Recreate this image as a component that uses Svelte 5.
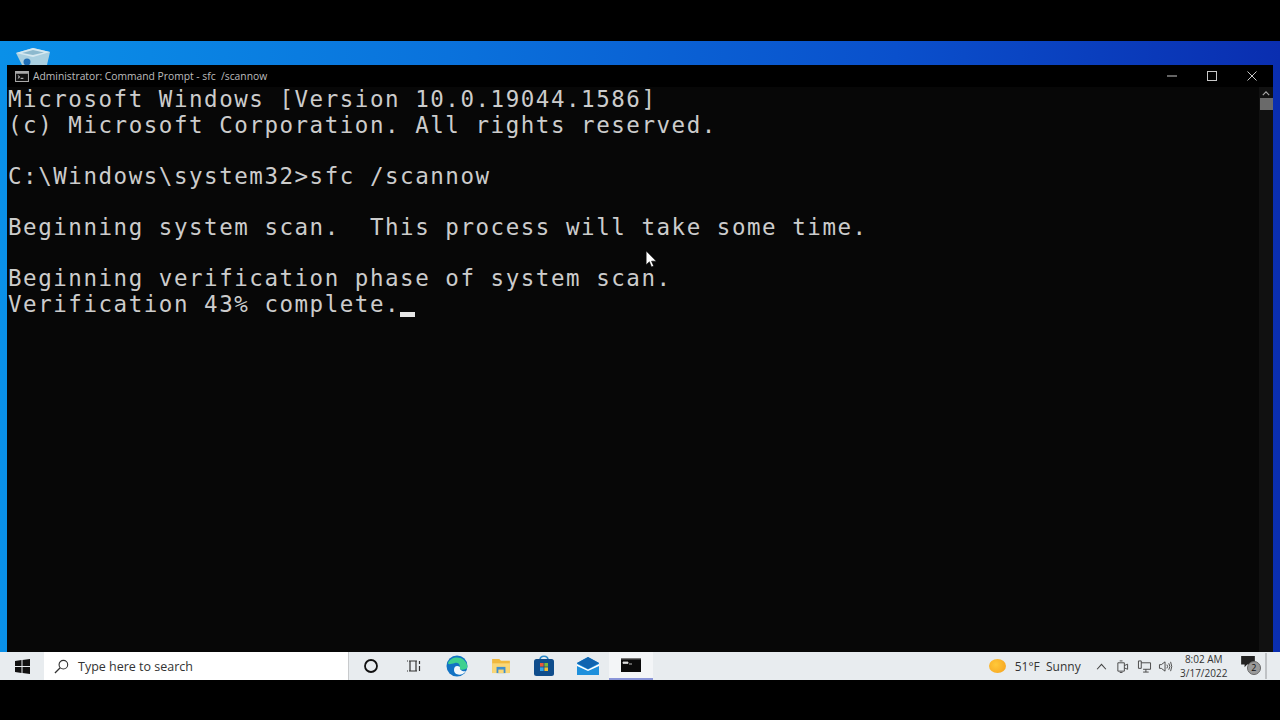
<script>
  const lines = [
    'Microsoft Windows [Version 10.0.19044.1586]',
    '(c) Microsoft Corporation. All rights reserved.',
    '',
    'C:\\Windows\\system32>sfc /scannow',
    '',
    'Beginning system scan.  This process will take some time.',
    '',
    'Beginning verification phase of system scan.',
  ];
</script>

<div class="screen">
  <div class="band"></div>
  <main class="desktop">
    <svg class="bin" viewBox="0 0 34 17" aria-hidden="true">
      <path d="M0 5 L17 0 L34 4 L31 17 H6 Z" fill="#a9cfe0" />
      <path d="M0 5 L17 0 L34 4 L17 9 Z" fill="#d5e8f0" />
      <path d="M6 5 L17 2 L28 4.5 L17 7 Z" fill="#8db9ce" />
      <circle cx="11" cy="14" r="3.5" fill="#1f6fb8" />
    </svg>
    <section class="window">
      <header class="titlebar">
        <svg class="appicon" viewBox="0 0 15 12" aria-hidden="true">
          <rect x="0.5" y="0.5" width="14" height="11" fill="#111" stroke="#bbb" />
          <rect x="1" y="1" width="13" height="2" fill="#aaa" />
          <path d="M3 5 L5 6.5 L3 8 M6 8 H9" stroke="#ddd" fill="none" />
        </svg>
        <span class="title">Administrator: Command Prompt - sfc  /scannow</span>
        <div class="controls">
          <svg viewBox="0 0 10 10" aria-hidden="true"><path d="M0 5 H10" /></svg>
          <svg viewBox="0 0 10 10" aria-hidden="true"><rect x="0.5" y="0.5" width="9" height="9" /></svg>
          <svg viewBox="0 0 10 10" aria-hidden="true"><path d="M0.5 0.5 L9.5 9.5 M9.5 0.5 L0.5 9.5" /></svg>
        </div>
      </header>
      <div class="console">
        <pre class="output">{#each lines as l}<div class="line">{l}</div>{/each}<div class="line">Verification 43% complete.<span class="caret"></span></div></pre>
        <div class="scroll">
          <svg viewBox="0 0 10 6" aria-hidden="true"><path d="M1 5 L5 1 L9 5" /></svg>
          <div class="thumb"></div>
        </div>
        <svg class="pointer" viewBox="0 0 10 15" aria-hidden="true">
          <path d="M0 0 V13 L3 10 L5 15 L7 14 L5 9.5 H9.5 Z" fill="#fff" stroke="#000" stroke-width="0.5" />
        </svg>
      </div>
    </section>
  </main>
  <footer class="taskbar">
    <div class="start">
      <svg viewBox="0 0 15 15" aria-hidden="true">
        <path d="M0 2 L6.5 1 V7 H0 Z M7.5 0.9 L15 0 V7 H7.5 Z M0 8 H6.5 V14 L0 13 Z M7.5 8 H15 V15 L7.5 14.1 Z" fill="#111" />
      </svg>
    </div>
    <div class="search">
      <svg viewBox="0 0 16 16" aria-hidden="true">
        <circle cx="10" cy="6" r="4.6" fill="none" stroke="#333" stroke-width="1.2" />
        <path d="M6.6 9.4 L1 15" stroke="#333" stroke-width="1.4" />
      </svg>
      <span>Type here to search</span>
    </div>
    <div class="apps">
      <div class="app"><svg class="w15" viewBox="0 0 16 16" aria-hidden="true"><circle cx="8" cy="8" r="6" fill="none" stroke="#111" stroke-width="1.8" /></svg></div>
      <div class="app"><svg class="w15" viewBox="0 0 16 16" aria-hidden="true"><path d="M3 3 H11 M3 13 H11 M4 3 V13 M10 3 V13 M1 3 H2 M1 13 H2 M13.5 3 V6 M13.5 8 V13" stroke="#333" fill="none" stroke-width="1.2" /></svg></div>
      <div class="app"><svg class="w22" viewBox="0 0 22 22" aria-hidden="true">
        <circle cx="11" cy="11" r="10.5" fill="#1273c4" />
        <path d="M2 8 C5 0 20 0 21.5 12 C21 15 14 16 13 13 C15 11 13 7 9 8 C5 9 2 10 2 8 Z" fill="#3fd08f" />
        <path d="M8 15 C8 11 11 10 14 12 C13 15 17 17 20 16 C17 21 8 21 8 15 Z" fill="#f2f8fc" />
      </svg></div>
      <div class="app"><svg class="w20" viewBox="0 0 20 18" aria-hidden="true">
        <path d="M0 1 H8 L10 3 H20 V17 H0 Z" fill="#f0b93f" />
        <path d="M0 6 H20 V17 H0 Z" fill="#f9d778" />
        <rect x="5" y="10" width="10" height="7" fill="#3f8fce" />
        <rect x="7" y="13" width="6" height="4" fill="#f9d778" />
      </svg></div>
      <div class="app"><svg class="w22" viewBox="0 0 22 22" aria-hidden="true">
        <path d="M7 5 C7 0 15 0 15 5" fill="none" stroke="#2a88c8" stroke-width="1.6" />
        <rect x="1" y="4" width="20" height="17" rx="2.5" fill="#0f4d8c" />
        <rect x="7" y="8" width="3.6" height="3.6" fill="#e8573a" />
        <rect x="11.4" y="8" width="3.6" height="3.6" fill="#7bb83a" />
        <rect x="7" y="12.4" width="3.6" height="3.6" fill="#35a5e8" />
        <rect x="11.4" y="12.4" width="3.6" height="3.6" fill="#f5bd2e" />
      </svg></div>
      <div class="app"><svg class="w22" viewBox="0 0 22 18" aria-hidden="true">
        <path d="M0 6 L11 0 L22 6 V18 H0 Z" fill="#1e90dc" />
        <path d="M0 6 L11 0 L22 6 L11 12 Z" fill="#0f64b0" />
        <path d="M0 7 L11 12.5 L22 7 V9 L11 14 L0 9 Z" fill="#fff" />
      </svg></div>
      <div class="app active"><svg class="w20" viewBox="0 0 20 14" aria-hidden="true">
        <rect width="20" height="14" fill="#0a0a0a" />
        <rect width="20" height="1.4" fill="#777" />
        <path d="M2 4 H7 V5.4 H2 Z M8 6 H11" stroke="#ddd" stroke-width="0.8" fill="#ddd" />
      </svg></div>
    </div>
    <div class="tray">
      <span class="sun"></span>
      <span class="weather">51°F&nbsp; Sunny</span>
      <svg class="tri" viewBox="0 0 10 6" aria-hidden="true"><path d="M1 5.5 L5 1 L9 5.5" /></svg>
      <svg class="tri-icon" viewBox="0 0 14 14" aria-hidden="true"><path d="M2 3 H9 V12 H2 Z M9 6 L12.5 4.5 V10 L9 8.5 M4 1 H7 M4 13.5 H7" /></svg>
      <svg class="tri-net" viewBox="0 0 15 14" aria-hidden="true"><path d="M1 1 H4 V9 H1 Z M4 3 H14 V10 H6 M9 10 V13 M6 13 H12" /></svg>
      <svg class="tri-vol" viewBox="0 0 15 14" aria-hidden="true"><path d="M1 5 H3 L7 2 V12 L3 9 H1 Z M9 5 Q10.5 7 9 9 M11 3.5 Q13.5 7 11 10.5 M13 2 Q15.5 7 13 12" /></svg>
      <div class="clock"><span>8:02 AM</span><span>3/17/2022</span></div>
      <div class="notes">
        <svg viewBox="0 0 16 14" aria-hidden="true"><path d="M0 0 H16 V10 H7 L4 13 V10 H0 Z" fill="#222" /></svg>
        <span class="badge">2</span>
      </div>
      <div class="edge"></div>
    </div>
  </footer>
  <div class="band"></div>
</div>

<style>
  :global(body) { margin: 0; background: #000; }
  .screen {
    width: 1280px;
    height: 720px;
    display: grid;
    grid-template-rows: 41px 1fr 28px 40px;
    overflow: hidden;
    font-family: "Open Sans", "Liberation Sans", sans-serif;
  }
  .band { background: #000; }
  .desktop {
    position: relative;
    padding: 24px 7px 0 7px;
    display: flex;
    min-height: 0;
    background: linear-gradient(90deg, #0a90e8 0%, #0a72dc 35%, #0a50cc 70%, #0a2eb0 100%);
  }
  .bin { position: absolute; left: 16px; top: 7px; width: 34px; height: 17px; }
  .window { flex: 1; display: flex; flex-direction: column; background: #070707; min-width: 0; }
  .titlebar {
    height: 22px;
    background: #000;
    display: flex;
    align-items: center;
    padding-left: 8px;
    color: #bdbdbd;
    flex: none;
  }
  .appicon { width: 14px; height: 11px; margin-right: 4px; }
  .title { white-space: pre; font-family: "Open Sans", sans-serif; font-size: 10.3px; }
  .controls { margin-left: auto; display: flex; gap: 30px; padding-right: 16px; }
  .controls svg { width: 10px; height: 10px; fill: none; stroke: #c8c8c8; stroke-width: 1; }
  .console { flex: 1; position: relative; display: flex; min-height: 0; }
  .output {
    flex: 1;
    margin: 0;
    padding: 0 0 0 1px;
    font-family: "DejaVu Sans Mono", monospace;
    font-size: 22.5px;
    letter-spacing: 1.535px;
    line-height: 25.6px;
    color: #cccccc;
  }
  .line { height: 25.6px; white-space: pre; }
  .caret { display: inline-block; width: 15px; height: 5px; background: #e6e6e6; vertical-align: -5px; }
  .scroll { width: 14px; background: #111; display: flex; flex-direction: column; align-items: center; flex: none; padding-top: 4px; gap: 2px; }
  .scroll svg { width: 8px; height: 5px; fill: none; stroke: #aaa; stroke-width: 1.4; }
  .thumb { width: 13px; height: 12px; background: #6a6a6a; }
  .pointer { position: absolute; left: 639px; top: 164px; width: 11px; height: 16px; }
  .taskbar { display: flex; align-items: stretch; background: #e8ecef; color: #222; font-size: 11.5px; }
  .start { width: 44px; display: flex; align-items: center; justify-content: center; }
  .start svg { width: 15px; height: 15px; }
  .search {
    width: 305px;
    background: #fff;
    border-right: 1px solid #c8cacc;
    display: flex;
    align-items: center;
    padding-left: 10px;
    box-sizing: border-box;
    gap: 9px;
    font-size: 12.5px;
    color: #333;
  }
  .search svg { width: 15px; height: 15px; }
  .apps { display: flex; padding-left: 0; }
  .app { width: 43.4px; display: flex; align-items: center; justify-content: center; box-sizing: border-box; }
  .app.active { background: #f3f5f7; border-bottom: 2px solid #8a95d8; }
  .w15 { width: 16px; height: 16px; }
  .w20 { width: 20px; height: 16px; }
  .w22 { width: 22px; height: 22px; }
  .tray { flex: 1; display: flex; align-items: center; padding-left: 336px; color: #333; min-width: 0; }
  .sun {
    width: 17px; height: 14px; border-radius: 50%;
    background: radial-gradient(circle at 40% 40%, #ffc93a, #f5a01e);
    margin-right: 9px;
    flex: none;
  }
  .weather { white-space: nowrap; width: 81px; flex: none; font-size: 12px; }
  .tray svg { fill: none; stroke: #444; stroke-width: 1; flex: none; }
  .tri { width: 11px; height: 7px; margin-right: 9px; }
  .tri-icon { width: 13px; height: 13px; margin-right: 8px; }
  .tri-net { width: 15px; height: 13px; margin-right: 6px; }
  .tri-vol { width: 15px; height: 13px; }
  .clock { display: flex; flex-direction: column; align-items: center; font-size: 10px; line-height: 14px; margin-left: 3px; width: 56px; flex: none; }
  .notes { position: relative; width: 22px; height: 20px; margin-left: 9px; flex: none; }
  .tray .notes svg { width: 14px; height: 12px; stroke: none; display: block; }
  .badge {
    position: absolute; left: 6px; top: 5px; width: 14px; height: 14px; border-radius: 50%;
    background: #9a9a9a; color: #111; font-size: 9px; line-height: 12px; text-align: center;
    border: 1px solid #666; box-sizing: border-box;
  }
  .edge { width: 2px; height: 26px; background: #bfc2c5; margin-left: 2px; flex: none; }
</style>
